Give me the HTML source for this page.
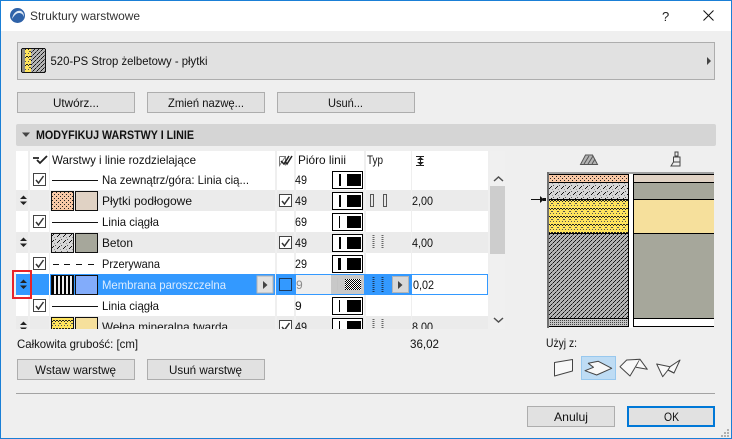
<!DOCTYPE html>
<html><head><meta charset="utf-8">
<style>
html,body{margin:0;padding:0;background:#efefef;width:732px;height:439px;overflow:hidden}
svg{display:block;position:absolute;left:0;top:0}
text{font-family:"Liberation Sans","DejaVu Sans",sans-serif;font-size:12px;fill:#111}
.c{shape-rendering:crispEdges}
</style></head><body>
<svg width="732" height="439" viewBox="0 0 732 439" xmlns="http://www.w3.org/2000/svg">
<defs>
<pattern id="pink" width="4" height="4" patternUnits="userSpaceOnUse"><rect width="4" height="4" fill="#f8c8a6"/><rect x="0" y="0" width="1" height="1" fill="#222"/><rect x="2" y="2" width="1" height="1" fill="#222"/></pattern>
<pattern id="conc" width="6" height="6" patternUnits="userSpaceOnUse"><rect width="6" height="6" fill="#d6d6d6"/><rect x="5" y="0" width="1" height="1" fill="#111"/><rect x="4" y="1" width="1" height="1" fill="#111"/><rect x="3" y="2" width="1" height="1" fill="#111"/><rect x="1" y="5" width="1" height="1" fill="#555"/><rect x="0" y="3" width="1" height="1" fill="#999"/></pattern>
<pattern id="yel" width="6" height="8" patternUnits="userSpaceOnUse"><rect width="6" height="8" fill="#ffe45c"/><rect x="2" y="0" width="2" height="1" fill="#222"/><rect x="0" y="0" width="1" height="1" fill="#222"/><rect x="5" y="0" width="1" height="1" fill="#222"/><rect x="1" y="1" width="1" height="1" fill="#222"/><rect x="4" y="1" width="1" height="1" fill="#222"/><rect x="0" y="3" width="1" height="1" fill="#555"/><rect x="5" y="3" width="1" height="1" fill="#555"/><rect x="1" y="5" width="1" height="1" fill="#555"/><rect x="4" y="5" width="1" height="1" fill="#555"/></pattern>
<pattern id="hat" width="4" height="4" patternUnits="userSpaceOnUse"><rect width="4" height="4" fill="#b4b4b4"/><rect x="3" y="0" width="1" height="1" fill="#111"/><rect x="2" y="1" width="1" height="1" fill="#222"/><rect x="1" y="2" width="1" height="1" fill="#111"/><rect x="0" y="3" width="1" height="1" fill="#555"/></pattern>
<pattern id="dot" width="2" height="2" patternUnits="userSpaceOnUse"><rect width="2" height="2" fill="#c4c4c4"/><rect width="1" height="1" fill="#444"/></pattern>
<pattern id="chk" width="2" height="2" patternUnits="userSpaceOnUse"><rect width="2" height="2" fill="#fff"/><rect width="1" height="1" fill="#000"/><rect x="1" y="1" width="1" height="1" fill="#000"/></pattern>
<pattern id="stripes" width="4" height="4" patternUnits="userSpaceOnUse"><rect width="4" height="4" fill="#eee"/><rect width="2" height="4" fill="#000"/></pattern>
<clipPath id="tbl"><rect x="16" y="151" width="473" height="178"/></clipPath>
</defs>

<g class="c">
<rect width="732" height="439" fill="#1a7fd6"/>
<rect x="1" y="1" width="730" height="437" fill="#efefef"/>
<rect x="1" y="1" width="730" height="30" fill="#fff"/>
</g>
<!-- title -->
<circle cx="17.500" cy="15.500" r="7.500" fill="#2f62a8"/>
<path d="M12 19c1-6 5-9 9-8 2 1 3 3 3 6-1-3-3-4-5-4-3 0-5 3-7 6z" fill="#dfe9f5"/>
<text x="30" y="20" textLength="110" lengthAdjust="spacingAndGlyphs" style="fill:#333">Struktury warstwowe</text>
<text x="662" y="21" style="font-size:13px;fill:#222">?</text>
<path d="M703.500 10.500l10 10M713.500 10.500l-10 10" stroke="#111" stroke-width="1" fill="none"/>

<!-- header box -->
<g class="c">
<rect x="17.500" y="42.500" width="697" height="37" fill="#e1e1e1" stroke="#adadad"/>
<rect x="21" y="48" width="25" height="25" rx="2" fill="#111"/>
<rect x="22" y="49" width="23" height="23" fill="url(#hat)"/>
<rect x="22" y="49" width="3" height="23" fill="#888"/>
<rect x="25" y="49" width="6" height="23" fill="url(#yel)"/>
</g>
<text x="50.500" y="65" textLength="157" lengthAdjust="spacingAndGlyphs">520-PS Strop żelbetowy - płytki</text>
<path d="M707 57v8l4-4z" fill="#444"/>

<!-- buttons -->
<g class="c" fill="#e1e1e1" stroke="#adadad">
<rect x="17.500" y="92.500" width="117" height="20"/>
<rect x="147.500" y="92.500" width="117" height="20"/>
<rect x="277.500" y="92.500" width="137" height="20"/>
</g>
<text x="53" y="107" textLength="46" lengthAdjust="spacingAndGlyphs">Utwórz...</text>
<text x="168" y="107" textLength="76" lengthAdjust="spacingAndGlyphs">Zmień nazwę...</text>
<text x="328" y="107" textLength="35" lengthAdjust="spacingAndGlyphs">Usuń...</text>

<!-- section -->
<rect x="16" y="124" width="700" height="22" rx="2" fill="#d5d5d5"/>
<path d="M22 132.500h8l-4 4.500z" fill="#444"/>
<text x="36" y="139" textLength="158" lengthAdjust="spacingAndGlyphs" style="font-weight:bold">MODYFIKUJ WARSTWY I LINIE</text>

<!-- table -->
<g clip-path="url(#tbl)">
<g class="c">
<rect x="16" y="151" width="472" height="18" fill="#fff"/>
<rect x="16" y="169" width="472" height="21" fill="#fff"/>
<rect x="16" y="190" width="472" height="21" fill="#ebebeb"/>
<rect x="16" y="211" width="472" height="21" fill="#fff"/>
<rect x="16" y="232" width="472" height="21" fill="#ebebeb"/>
<rect x="16" y="253" width="472" height="21" fill="#fff"/>
<rect x="16" y="295" width="472" height="21" fill="#fff"/>
<rect x="16" y="316" width="472" height="21" fill="#ebebeb"/>
<g fill="#efefef">
<rect x="28" y="151" width="2" height="178"/>
<rect x="49" y="151" width="1" height="178"/>
<rect x="275" y="151" width="2" height="178"/>
<rect x="294" y="151" width="2" height="178"/>
<rect x="364" y="151" width="2" height="178"/>
<rect x="411" y="151" width="1" height="178"/>
</g>
<!-- selected row -->
<rect x="16" y="274" width="33" height="21" fill="#3399ff"/>
<rect x="49" y="274" width="1" height="21" fill="#fff"/>
<rect x="50" y="274" width="225" height="21" fill="#3399ff"/>
<rect x="276" y="274" width="19" height="21" fill="#3399ff"/>
<rect x="295" y="274" width="70" height="21" fill="#3399ff"/>
<rect x="296" y="275" width="68" height="19" fill="#eeeeee"/>
<rect x="331" y="275" width="33" height="19" fill="#c8c8c8"/>
<rect x="365" y="274" width="46" height="21" fill="#3399ff"/>
<rect x="411.500" y="274.500" width="76" height="20" fill="#fff" stroke="#3399ff"/>
</g>

<!-- header icons -->
<path d="M33 158h6M37 160l3 3 7-7" stroke="#222" stroke-width="1.800" fill="none"/>
<text x="52" y="164" textLength="144" lengthAdjust="spacingAndGlyphs">Warstwy i linie rozdzielające</text>
<path d="M279.500 156.500h6v9M279.500 156.500v9l6-9" stroke="#777" stroke-width="1" fill="none"/>
<path d="M281 161l3 3 5-8M285 161l2 3 5-8" stroke="#222" stroke-width="1.500" fill="none"/>
<text x="298" y="164" textLength="48" lengthAdjust="spacingAndGlyphs">Pióro linii</text>
<text x="367" y="164" textLength="16" lengthAdjust="spacingAndGlyphs">Typ</text>
<g class="c"><rect x="416" y="156" width="8" height="1" fill="#222"/><rect x="416" y="165" width="8" height="1" fill="#222"/><rect x="420" y="157" width="1" height="8" fill="#222"/></g>
<path d="M417 160h7l-3.500-3zM417 162h7l-3.500 3z" fill="#222"/>

<!-- move arrows -->
<g fill="#222">
<path d="M20 199h7l-3.500-3.500zM20 201.500h7l-3.500 3.500z"/>
<path d="M20 241h7l-3.500-3.500zM20 243.500h7l-3.500 3.500z"/>
<path d="M20 283h7l-3.500-3.500zM20 285.500h7l-3.500 3.500z"/>
<path d="M20 325h7l-3.500-3.500zM20 327.500h7l-3.500 3.500z"/>
</g>

<!-- checkboxes name col -->
<g class="c" fill="#fff" stroke="#444">
<rect x="33.500" y="173.500" width="12" height="12"/>
<rect x="33.500" y="215.500" width="12" height="12"/>
<rect x="33.500" y="257.500" width="12" height="12"/>
<rect x="33.500" y="299.500" width="12" height="12"/>
</g>
<g stroke="#333" stroke-width="1.500" fill="none">
<path d="M36 180l2.500 3 5-7"/>
<path d="M36 222l2.500 3 5-7"/>
<path d="M36 264l2.500 3 5-7"/>
<path d="M36 306l2.500 3 5-7"/>
</g>

<!-- line samples -->
<g class="c">
<rect x="52" y="180" width="46" height="1" fill="#111"/>
<rect x="52" y="222" width="46" height="1" fill="#111"/>
<rect x="53" y="264" width="6" height="1" fill="#111"/><rect x="64" y="264" width="6" height="1" fill="#111"/><rect x="76" y="264" width="6" height="1" fill="#111"/><rect x="88" y="264" width="6" height="1" fill="#111"/>
<rect x="52" y="306" width="46" height="1" fill="#111"/>
<!-- swatches -->
<rect x="51.500" y="191.500" width="22" height="19" fill="url(#pink)" stroke="#111"/>
<rect x="75.500" y="191.500" width="22" height="19" fill="#e0d2c4" stroke="#111"/>
<rect x="51.500" y="233.500" width="22" height="19" fill="url(#conc)" stroke="#111"/>
<rect x="75.500" y="233.500" width="22" height="19" fill="#a6a79b" stroke="#111"/>
<rect x="51.500" y="275.500" width="22" height="19" fill="url(#stripes)" stroke="#111"/>
<rect x="75.500" y="275.500" width="22" height="19" fill="#82acfb" stroke="#111"/>
<rect x="51.500" y="317.500" width="22" height="19" fill="url(#yel)" stroke="#111"/>
<rect x="75.500" y="317.500" width="22" height="19" fill="#f6e09c" stroke="#111"/>
<!-- selected small button -->
<rect x="257" y="276" width="16" height="17" fill="#e1e1e1" stroke="#b4b4b4"/>
</g>
<path d="M263 281v8l4.500-4z" fill="#444"/>

<text x="102" y="184" textLength="147" lengthAdjust="spacingAndGlyphs">Na zewnątrz/góra: Linia cią...</text>
<text x="102" y="205" textLength="90" lengthAdjust="spacingAndGlyphs">Płytki podłogowe</text>
<text x="102" y="226" textLength="57" lengthAdjust="spacingAndGlyphs">Linia ciągła</text>
<text x="102" y="247" textLength="31" lengthAdjust="spacingAndGlyphs">Beton</text>
<text x="102" y="268" textLength="58" lengthAdjust="spacingAndGlyphs">Przerywana</text>
<text x="102" y="289" textLength="124" lengthAdjust="spacingAndGlyphs" style="fill:#dcecff">Membrana paroszczelna</text>
<text x="102" y="310" textLength="57" lengthAdjust="spacingAndGlyphs">Linia ciągła</text>
<text x="102" y="331" textLength="126" lengthAdjust="spacingAndGlyphs">Wełna mineralna twarda</text>

<!-- checkboxes col 2 -->
<g class="c" fill="#fff" stroke="#444">
<rect x="279.500" y="194.500" width="12" height="12"/>
<rect x="279.500" y="236.500" width="12" height="12"/>
<rect x="279.500" y="320.500" width="12" height="12"/>
<rect x="279.500" y="278.500" width="12" height="12" fill="#3399ff" stroke="#1d3b5e"/>
</g>
<g stroke="#333" stroke-width="1.500" fill="none">
<path d="M282 201l2.500 3 5-7"/>
<path d="M282 243l2.500 3 5-7"/>
<path d="M282 327l2.500 3 5-7"/>
</g>

<!-- pen numbers -->
<text x="295" y="184" textLength="12" lengthAdjust="spacingAndGlyphs">49</text>
<text x="295" y="205" textLength="12" lengthAdjust="spacingAndGlyphs">49</text>
<text x="295" y="226" textLength="12" lengthAdjust="spacingAndGlyphs">69</text>
<text x="295" y="247" textLength="12" lengthAdjust="spacingAndGlyphs">49</text>
<text x="295" y="268" textLength="12" lengthAdjust="spacingAndGlyphs">29</text>
<text x="296" y="289" style="fill:#8c8c8c">9</text>
<text x="295" y="310">9</text>
<text x="295" y="331" textLength="12" lengthAdjust="spacingAndGlyphs">49</text>

<!-- pen boxes -->
<g class="c">
<g fill="#fff" stroke="#000">
<rect x="332.500" y="171.500" width="30" height="17"/>
<rect x="332.500" y="192.500" width="30" height="17"/>
<rect x="332.500" y="213.500" width="30" height="17"/>
<rect x="332.500" y="234.500" width="30" height="17"/>
<rect x="332.500" y="255.500" width="30" height="17"/>
<rect x="332.500" y="297.500" width="30" height="17"/>
<rect x="332.500" y="318.500" width="30" height="17"/>
</g>
<g fill="#000">
<rect x="339" y="174" width="2" height="12"/><rect x="347" y="174" width="14" height="12"/>
<rect x="339" y="195" width="2" height="12"/><rect x="347" y="195" width="14" height="12"/>
<rect x="339" y="216" width="1" height="12"/><rect x="347" y="216" width="14" height="12"/>
<rect x="339" y="237" width="2" height="12"/><rect x="347" y="237" width="14" height="12"/>
<rect x="338" y="258" width="3" height="12"/><rect x="347" y="258" width="14" height="12"/>
<rect x="339" y="300" width="1" height="12"/><rect x="347" y="300" width="14" height="12"/>
<rect x="339" y="321" width="1" height="12"/><rect x="347" y="321" width="14" height="12"/>
</g>
<rect x="337" y="278" width="1" height="12" fill="url(#dot)"/>
<rect x="345" y="279" width="16" height="11" fill="url(#chk)"/>
<!-- type icons -->
<rect x="370.500" y="194.500" width="3" height="12" fill="#e8e8e8" stroke="#555"/>
<rect x="383.500" y="194.500" width="3" height="12" fill="#e8e8e8" stroke="#555"/>
<rect x="392.500" y="276.500" width="16" height="16" fill="#d8d8d8" stroke="#b4b4b4"/>
</g>
<path d="M398 281v8l4.500-4z" fill="#444"/>
<g fill="none" stroke="#666" stroke-width="2" stroke-dasharray="1 1">
<path d="M373.500 235v14M382.500 235v14M373.500 319v14M382.500 319v14"/>
</g>
<path d="M373.500 277v15M382.500 277v15" fill="none" stroke="#1c3a5c" stroke-width="2" stroke-dasharray="1 1"/>

<!-- thickness -->
<text x="412" y="205" textLength="21" lengthAdjust="spacingAndGlyphs">2,00</text>
<text x="412" y="247" textLength="21" lengthAdjust="spacingAndGlyphs">4,00</text>
<text x="413" y="289" textLength="21" lengthAdjust="spacingAndGlyphs">0,02</text>
<text x="412" y="331" textLength="21" lengthAdjust="spacingAndGlyphs">8,00</text>
</g>

<!-- scrollbar -->
<g class="c">
<rect x="490" y="151" width="15" height="178" fill="#f0f0f0"/>
<rect x="490" y="186" width="15" height="68" fill="#cdcdcd"/>
</g>
<path d="M494 181l4.500-4 4.500 4M494 318l4.500 4 4.500-4" stroke="#505050" stroke-width="1.500" fill="none"/>

<!-- red highlight -->
<rect class="c" x="13" y="271" width="18" height="27" fill="none" stroke="#e8232a" stroke-width="2"/>

<!-- preview icons -->
<path d="M580.500 164.500l5-9.500h7l5 9.500z" fill="#b4b4b4" stroke="#555" stroke-width="1"/>
<path d="M584 164l5-8M588 164l5-8M592 164l3-5" stroke="#555" stroke-width="1" fill="none"/>
<path d="M675 152h3v4h-3zM673.500 157h6.500v5h-6.500zM671 166l2.500-4h6.500v4z" fill="#eee" stroke="#444" stroke-width="1"/>

<!-- preview -->
<g class="c">
<rect x="547" y="172" width="167" height="2" fill="#a0a0a0"/>
<rect x="547" y="172" width="2" height="156" fill="#707070"/>
<rect x="549" y="174" width="80" height="153" fill="#fff"/>
<rect x="549" y="175" width="80" height="7" fill="url(#pink)"/>
<rect x="549" y="174" width="80" height="1" fill="#000"/>
<rect x="549" y="182" width="80" height="1" fill="#000"/>
<rect x="549" y="183" width="80" height="16" fill="url(#conc)"/>
<rect x="549" y="199" width="80" height="1" fill="#000"/>
<rect x="549" y="200" width="80" height="33" fill="url(#yel)"/>
<rect x="549" y="233" width="80" height="1" fill="#000"/>
<rect x="549" y="234" width="80" height="84" fill="url(#hat)"/>
<rect x="549" y="318" width="80" height="1" fill="#000"/>
<rect x="549" y="319" width="80" height="7" fill="url(#dot)"/>
<rect x="549" y="326" width="80" height="1" fill="#000"/>
<rect x="628" y="174" width="1" height="153" fill="#000"/>
<rect x="629" y="174" width="4" height="154" fill="#fff"/>
<rect x="633" y="174" width="1" height="153" fill="#000"/>
<rect x="634" y="174" width="80" height="1" fill="#000"/>
<rect x="634" y="175" width="80" height="7" fill="#e0d2c4"/>
<rect x="634" y="182" width="80" height="1" fill="#000"/>
<rect x="634" y="183" width="80" height="16" fill="#a6a79b"/>
<rect x="634" y="199" width="80" height="1" fill="#000"/>
<rect x="634" y="200" width="80" height="33" fill="#f6e09c"/>
<rect x="634" y="233" width="80" height="1" fill="#000"/>
<rect x="634" y="234" width="80" height="84" fill="#a6a79b"/>
<rect x="634" y="318" width="80" height="1" fill="#000"/>
<rect x="634" y="319" width="80" height="7" fill="#fff"/>
<rect x="634" y="326" width="80" height="1" fill="#000"/>
<rect x="531" y="199" width="14" height="1" fill="#111"/>
<rect x="543" y="198" width="3" height="3" fill="#111"/>
</g>
<path d="M540 196v7l4-3.500z" fill="#111"/>

<!-- Use with -->
<text x="546" y="347" textLength="31" lengthAdjust="spacingAndGlyphs">Użyj z:</text>
<rect class="c" x="581.500" y="356.500" width="34" height="23" fill="#bedcf4" stroke="#98c8ee"/>
<g stroke="#444" stroke-width="1" stroke-linejoin="round" fill="#f8f8f8">
<path d="M554.500 362.500l18-3v11.500l-18 5z"/>
<path d="M585 370.700l8.500-3.400-5.200-4 10-2 13.400 7-15 6.700z"/>
<path d="M620 366.700l6.700-6.700 13.300-.7-10 16.700z"/>
<path d="M640 359.300l7.300 10-11.300-2"/>
<path d="M656.700 364l13.300 2.700 10-6.700-6 13-6-3-5.300 6.700z"/>
<path d="M670 366.700l-2 3.300 6 3" fill="none"/>
</g>

<!-- totals -->
<text x="17" y="348" textLength="121" lengthAdjust="spacingAndGlyphs">Całkowita grubość: [cm]</text>
<text x="410" y="348" textLength="29" lengthAdjust="spacingAndGlyphs">36,02</text>

<g class="c" fill="#e1e1e1" stroke="#adadad">
<rect x="17.500" y="359.500" width="117" height="20"/>
<rect x="147.500" y="359.500" width="117" height="20"/>
</g>
<text x="35" y="374" textLength="81" lengthAdjust="spacingAndGlyphs">Wstaw warstwę</text>
<text x="169" y="374" textLength="73" lengthAdjust="spacingAndGlyphs">Usuń warstwę</text>

<rect class="c" x="16" y="393" width="699" height="1" fill="#a3a3a3"/>

<g class="c">
<rect x="527.500" y="406.500" width="87" height="20" fill="#e1e1e1" stroke="#adadad"/>
<rect x="628" y="407" width="86" height="19" fill="#e1e1e1" stroke="#0078d7" stroke-width="2"/>
<g fill="#b0b0b0">
<rect x="727" y="429" width="2" height="2"/>
<rect x="724" y="432" width="2" height="2"/><rect x="727" y="432" width="2" height="2"/>
<rect x="721" y="435" width="2" height="2"/><rect x="724" y="435" width="2" height="2"/><rect x="727" y="435" width="2" height="2"/>
</g>
</g>
<text x="554" y="421" textLength="34" lengthAdjust="spacingAndGlyphs">Anuluj</text>
<text x="664" y="421" textLength="15" lengthAdjust="spacingAndGlyphs">OK</text>
</svg>
</body></html>
